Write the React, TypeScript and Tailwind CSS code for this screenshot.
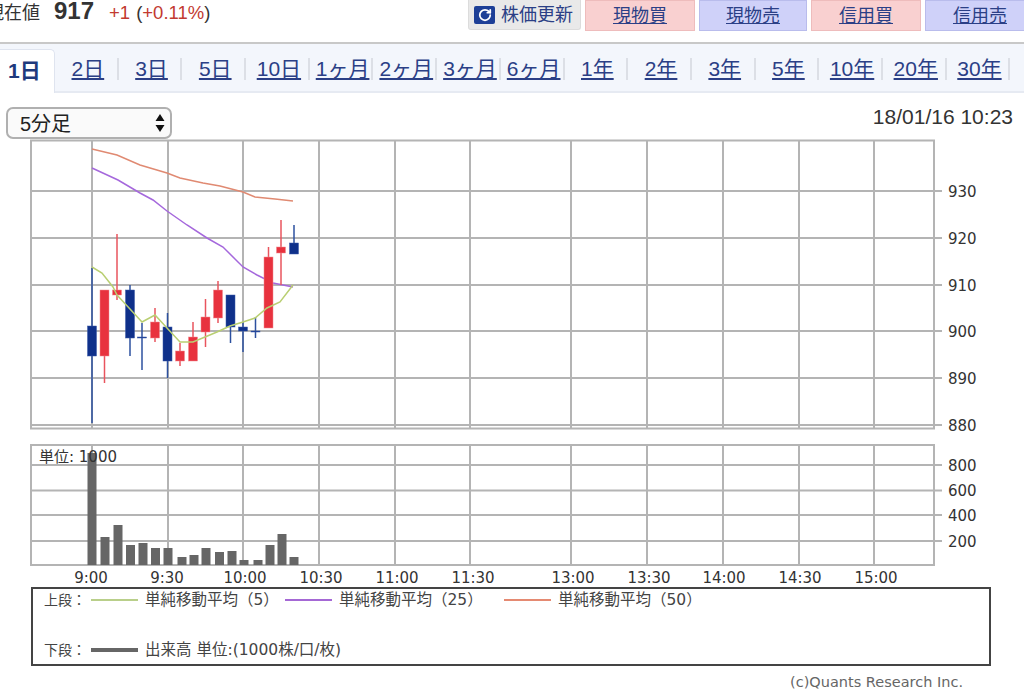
import { RotateCw } from "lucide-react"

const FONT = "[font-family:'Liberation_Sans','Noto_Sans_CJK_JP',sans-serif]"

const tabs = ["2日", "3日", "5日", "10日", "1ヶ月", "2ヶ月", "3ヶ月", "6ヶ月", "1年", "2年", "3年", "5年", "10年", "20年", "30年"]

interface Candle {
  x: number
  up: boolean
  top: number
  bottom: number
  high: number
  low: number
}

const candles: Candle[] = [
  { x: 92, up: false, top: 326, bottom: 356, high: 268, low: 423 },
  { x: 104.5, up: true, top: 290, bottom: 356, high: 290, low: 383 },
  { x: 117, up: true, top: 290, bottom: 295, high: 234, low: 300 },
  { x: 130, up: false, top: 290, bottom: 338, high: 285, low: 356 },
  { x: 142, up: false, top: 337, bottom: 338, high: 323, low: 370 },
  { x: 155, up: true, top: 322, bottom: 338, high: 308, low: 342 },
  { x: 167.5, up: false, top: 327, bottom: 361, high: 313, low: 378 },
  { x: 180, up: true, top: 351, bottom: 361, high: 343, low: 366 },
  { x: 193, up: true, top: 337, bottom: 361, high: 322, low: 361 },
  { x: 205.5, up: true, top: 317, bottom: 332, high: 299, low: 347 },
  { x: 218, up: true, top: 290, bottom: 318, high: 281, low: 323 },
  { x: 230.5, up: false, top: 295, bottom: 327, high: 295, low: 343 },
  { x: 243, up: false, top: 327, bottom: 331, high: 322, low: 352 },
  { x: 255.5, up: false, top: 331, bottom: 332, high: 317, low: 338 },
  { x: 268.5, up: true, top: 257, bottom: 328, high: 247, low: 328 },
  { x: 281, up: true, top: 247, bottom: 253, high: 220, low: 285 },
  { x: 294, up: false, top: 243, bottom: 254, high: 225, low: 254 },
]

const volumes: [number, number][] = [
  [92, 453], [105, 537], [118, 525], [130.5, 545], [143, 543], [155.5, 548], [168, 548], [182, 557], [194, 555],
  [206, 548], [219.5, 552], [232, 551], [244, 560], [258, 560], [270, 545], [282, 534], [294, 557],
]

const ma5 = "92,267 102,273 113,287 117,295 130,309 142,322 155,315 167,328 180,342 193,342 205,337 217,332 230,326 243,322 255,318 267,308 280,302 293,285"
const ma25 = "92,168 118,180 140,193 153,200 167,211 187,225 207,238 223,247 235,259 243,267 257,275 273,283 293,287"
const ma50 = "92,149 117,155 140,165 167,173 180,178 203,183 220,186 243,192 255,197 275,199 293,201"

const gridX = [92, 168, 243, 319, 395, 470, 571, 647, 723, 799, 874]
const times: [number, string][] = [
  [91, "9:00"], [167, "9:30"], [245, "10:00"], [321, "10:30"], [397, "11:00"], [473, "11:30"], [573, "13:00"],
  [649, "13:30"], [724, "14:00"], [800, "14:30"], [876, "15:00"],
]
const priceRows: [number, string][] = [[191, "930"], [238, "920"], [285, "910"], [331, "900"], [378, "890"], [425, "880"]]
const volumeRows: [number, string][] = [[465, "800"], [490.5, "600"], [515, "400"], [541, "200"]]

function TradeButton({ label, kind, className }: { label: string; kind: "buy" | "sell"; className: string }) {
  return (
    <a
      className={`flex h-[31px] shrink-0 items-center justify-center border pt-[1px] text-[18px] text-[#2b3f86] underline ${
        kind === "buy" ? "border-[#eebcbc] bg-[#f9d0d0]" : "border-[#b9bcec] bg-[#cfd1f9]"
      } ${className}`}
    >
      {label}
    </a>
  )
}

function Chart() {
  return (
    <svg viewBox="0 139 1024 448" className="block h-[448px] w-[1024px] shrink-0" style={{ fontFamily: "'DejaVu Sans', sans-serif" }}>
      <g stroke="#b4b4b4" strokeWidth="2" fill="none">
        <rect x="31" y="140.5" width="903" height="288" />
        {gridX.map((x) => (
          <line key={x} x1={x} x2={x} y1="140" y2="428" />
        ))}
        {priceRows.map(([y]) => (
          <line key={y} x1="31" x2="942" y1={y} y2={y} />
        ))}
        <rect x="31" y="445" width="903" height="120" />
        {gridX.map((x) => (
          <line key={x} x1={x} x2={x} y1="445" y2="565" />
        ))}
        {volumeRows.map(([y]) => (
          <line key={y} x1="31" x2="942" y1={y} y2={y} />
        ))}
      </g>

      <polyline points={ma50} fill="none" stroke="#e08a72" strokeWidth="1.5" />
      <polyline points={ma25} fill="none" stroke="#a568dc" strokeWidth="1.5" />

      {candles.map((c) => (
        <g key={c.x}>
          <line x1={c.x} x2={c.x} y1={c.high} y2={c.low} stroke={c.up ? "#e9545e" : "#2c509f"} strokeWidth="1.5" />
          <rect
            x={c.x - 4.5}
            y={c.top}
            width="9"
            height={c.bottom - c.top}
            fill={c.up ? "#e8323e" : "#0f308a"}
            stroke={c.up ? "#f08a90" : "#3a5aa8"}
            strokeWidth="0.5"
          />
        </g>
      ))}
      <polyline points={ma5} fill="none" stroke="#b9cf72" strokeWidth="1.5" />

      {volumes.map(([x, top]) => (
        <rect key={x} x={x - 4.5} y={top} width="9" height={565 - top} fill="#666666" />
      ))}

      <g fill="#333333" fontSize="15">
        {[...priceRows, ...volumeRows].map(([y, label]) => (
          <text key={label} x="948" y={y + 5.5}>
            {label}
          </text>
        ))}
        {times.map(([x, label]) => (
          <text key={label} x={x} y="583" textAnchor="middle">
            {label}
          </text>
        ))}
        <text x="39" y="462" fontSize="15" style={{ fontFamily: "'DejaVu Sans', 'Noto Sans CJK JP', sans-serif" }}>
          単位: 1000
        </text>
      </g>
    </svg>
  )
}

export default function App() {
  return (
    <div className={`flex h-[689px] w-[1024px] flex-col overflow-hidden bg-white ${FONT}`}>
      <div className="flex h-[44px] shrink-0 items-start overflow-hidden border-b-2 border-[#c8c8c8]">
        <div className="ml-[-14px] flex w-[482px] shrink-0 items-baseline text-[#333333]">
          <span className="text-[18px] leading-[22px]">現在値</span>
          <span className="ml-[14px] text-[24px] leading-[22px] font-bold">917</span>
          <span className="ml-[15px] text-[18.5px] leading-[22px] text-[#c23a30]">+1</span>
          <span className="ml-[6px] text-[18.5px] leading-[22px]">
            (<span className="text-[#c23a30]">+0.11%</span>)
          </span>
        </div>
        <div className="flex h-[30px] w-[113px] shrink-0 items-center gap-[6px] rounded-b-[3px] border border-t-0 border-[#dcdcdc] bg-[#e9e9e9] pt-[1px] pl-[5px] text-[18px] text-[#2b3f86]">
          <span className="flex h-[18px] w-[21px] items-center justify-center rounded-[2px] bg-[#1d3f97]">
            <RotateCw size={14} color="#ffffff" strokeWidth={3} />
          </span>
          株価更新
        </div>
        <TradeButton label="現物買" kind="buy" className="ml-[4px] w-[110px]" />
        <TradeButton label="現物売" kind="sell" className="ml-[4px] w-[108px]" />
        <TradeButton label="信用買" kind="buy" className="ml-[4px] w-[110px]" />
        <TradeButton label="信用売" kind="sell" className="ml-[4px] w-[110px]" />
      </div>

      <div className="flex h-[49px] shrink-0 items-end border-b-2 border-[#e6eaf2] bg-[#f3f6fc]">
        <div className="mb-[-2px] flex h-[44px] w-[55px] shrink-0 items-center rounded-tr-[5px] border-t border-r border-[#dfe4ef] bg-white pb-[2px] pl-[8px] text-[21px] font-bold text-[#1f3a7c]">
          1日
        </div>
        <div className="flex h-[44px] items-center">
          {tabs.map((tab) => (
            <div key={tab} className="flex h-[22px] w-[63.7px] shrink-0 items-center justify-center border-r-2 border-[#dcdfe6] pl-[4px] text-[21px] text-[#2b3f86]">
              <a className="underline underline-offset-2">{tab}</a>
            </div>
          ))}
        </div>
      </div>

      <div className="flex h-[46px] shrink-0 items-start justify-between pt-[14px] pr-[11px] pl-[6px]">
        <div className="relative h-[32px] w-[166px]">
          <select className="h-full w-full appearance-none rounded-[7px] border-2 border-[#b0b0b0] bg-[#fafafa] pl-[12px] text-[20px] text-[#222222]">
            <option>5分足</option>
          </select>
          <svg viewBox="0 0 10 18" className="absolute top-[7px] right-[7px] h-[18px] w-[10px]">
            <path d="M5 0 L9.5 7 L0.5 7 Z M5 18 L9.5 11 L0.5 11 Z" fill="#111111" />
          </svg>
        </div>
        <div className="mt-[-2px] text-[21px] leading-[24px] text-[#333333]">18/01/16 10:23</div>
      </div>

      <Chart />

      <div className="ml-[31px] flex h-[79px] w-[960px] shrink-0 flex-col justify-between border-2 border-[#444444] pt-[1px] pb-[4px] pl-[11px] [font-family:'DejaVu_Sans','Noto_Sans_CJK_JP',sans-serif] text-[15.5px] leading-[20px] text-[#444444]">
        <div className="flex items-center">
          <span className="w-[47px] text-[14px]">上段：</span>
          <div className="flex w-[194px] items-center gap-[7px]">
            <span className="h-[1.5px] w-[47px] bg-[#b9cf8a]" />
            単純移動平均（5）
          </div>
          <div className="flex w-[219px] items-center gap-[7px]">
            <span className="h-[1.5px] w-[47px] bg-[#a568d5]" />
            単純移動平均（25）
          </div>
          <div className="flex items-center gap-[7px]">
            <span className="h-[1.5px] w-[47px] bg-[#e58a72]" />
            単純移動平均（50）
          </div>
        </div>
        <div className="flex items-center">
          <span className="w-[47px] text-[14px]">下段：</span>
          <div className="flex items-center gap-[7px]">
            <span className="h-[4px] w-[47px] bg-[#666666]" />
            出来高 単位:(1000株/口/枚)
          </div>
        </div>
      </div>

      <div className="mt-[9px] pr-[61px] text-right [font-family:'DejaVu_Sans',sans-serif] text-[14.5px] leading-[14px] text-[#666666]">(c)Quants Research Inc.</div>
    </div>
  )
}
